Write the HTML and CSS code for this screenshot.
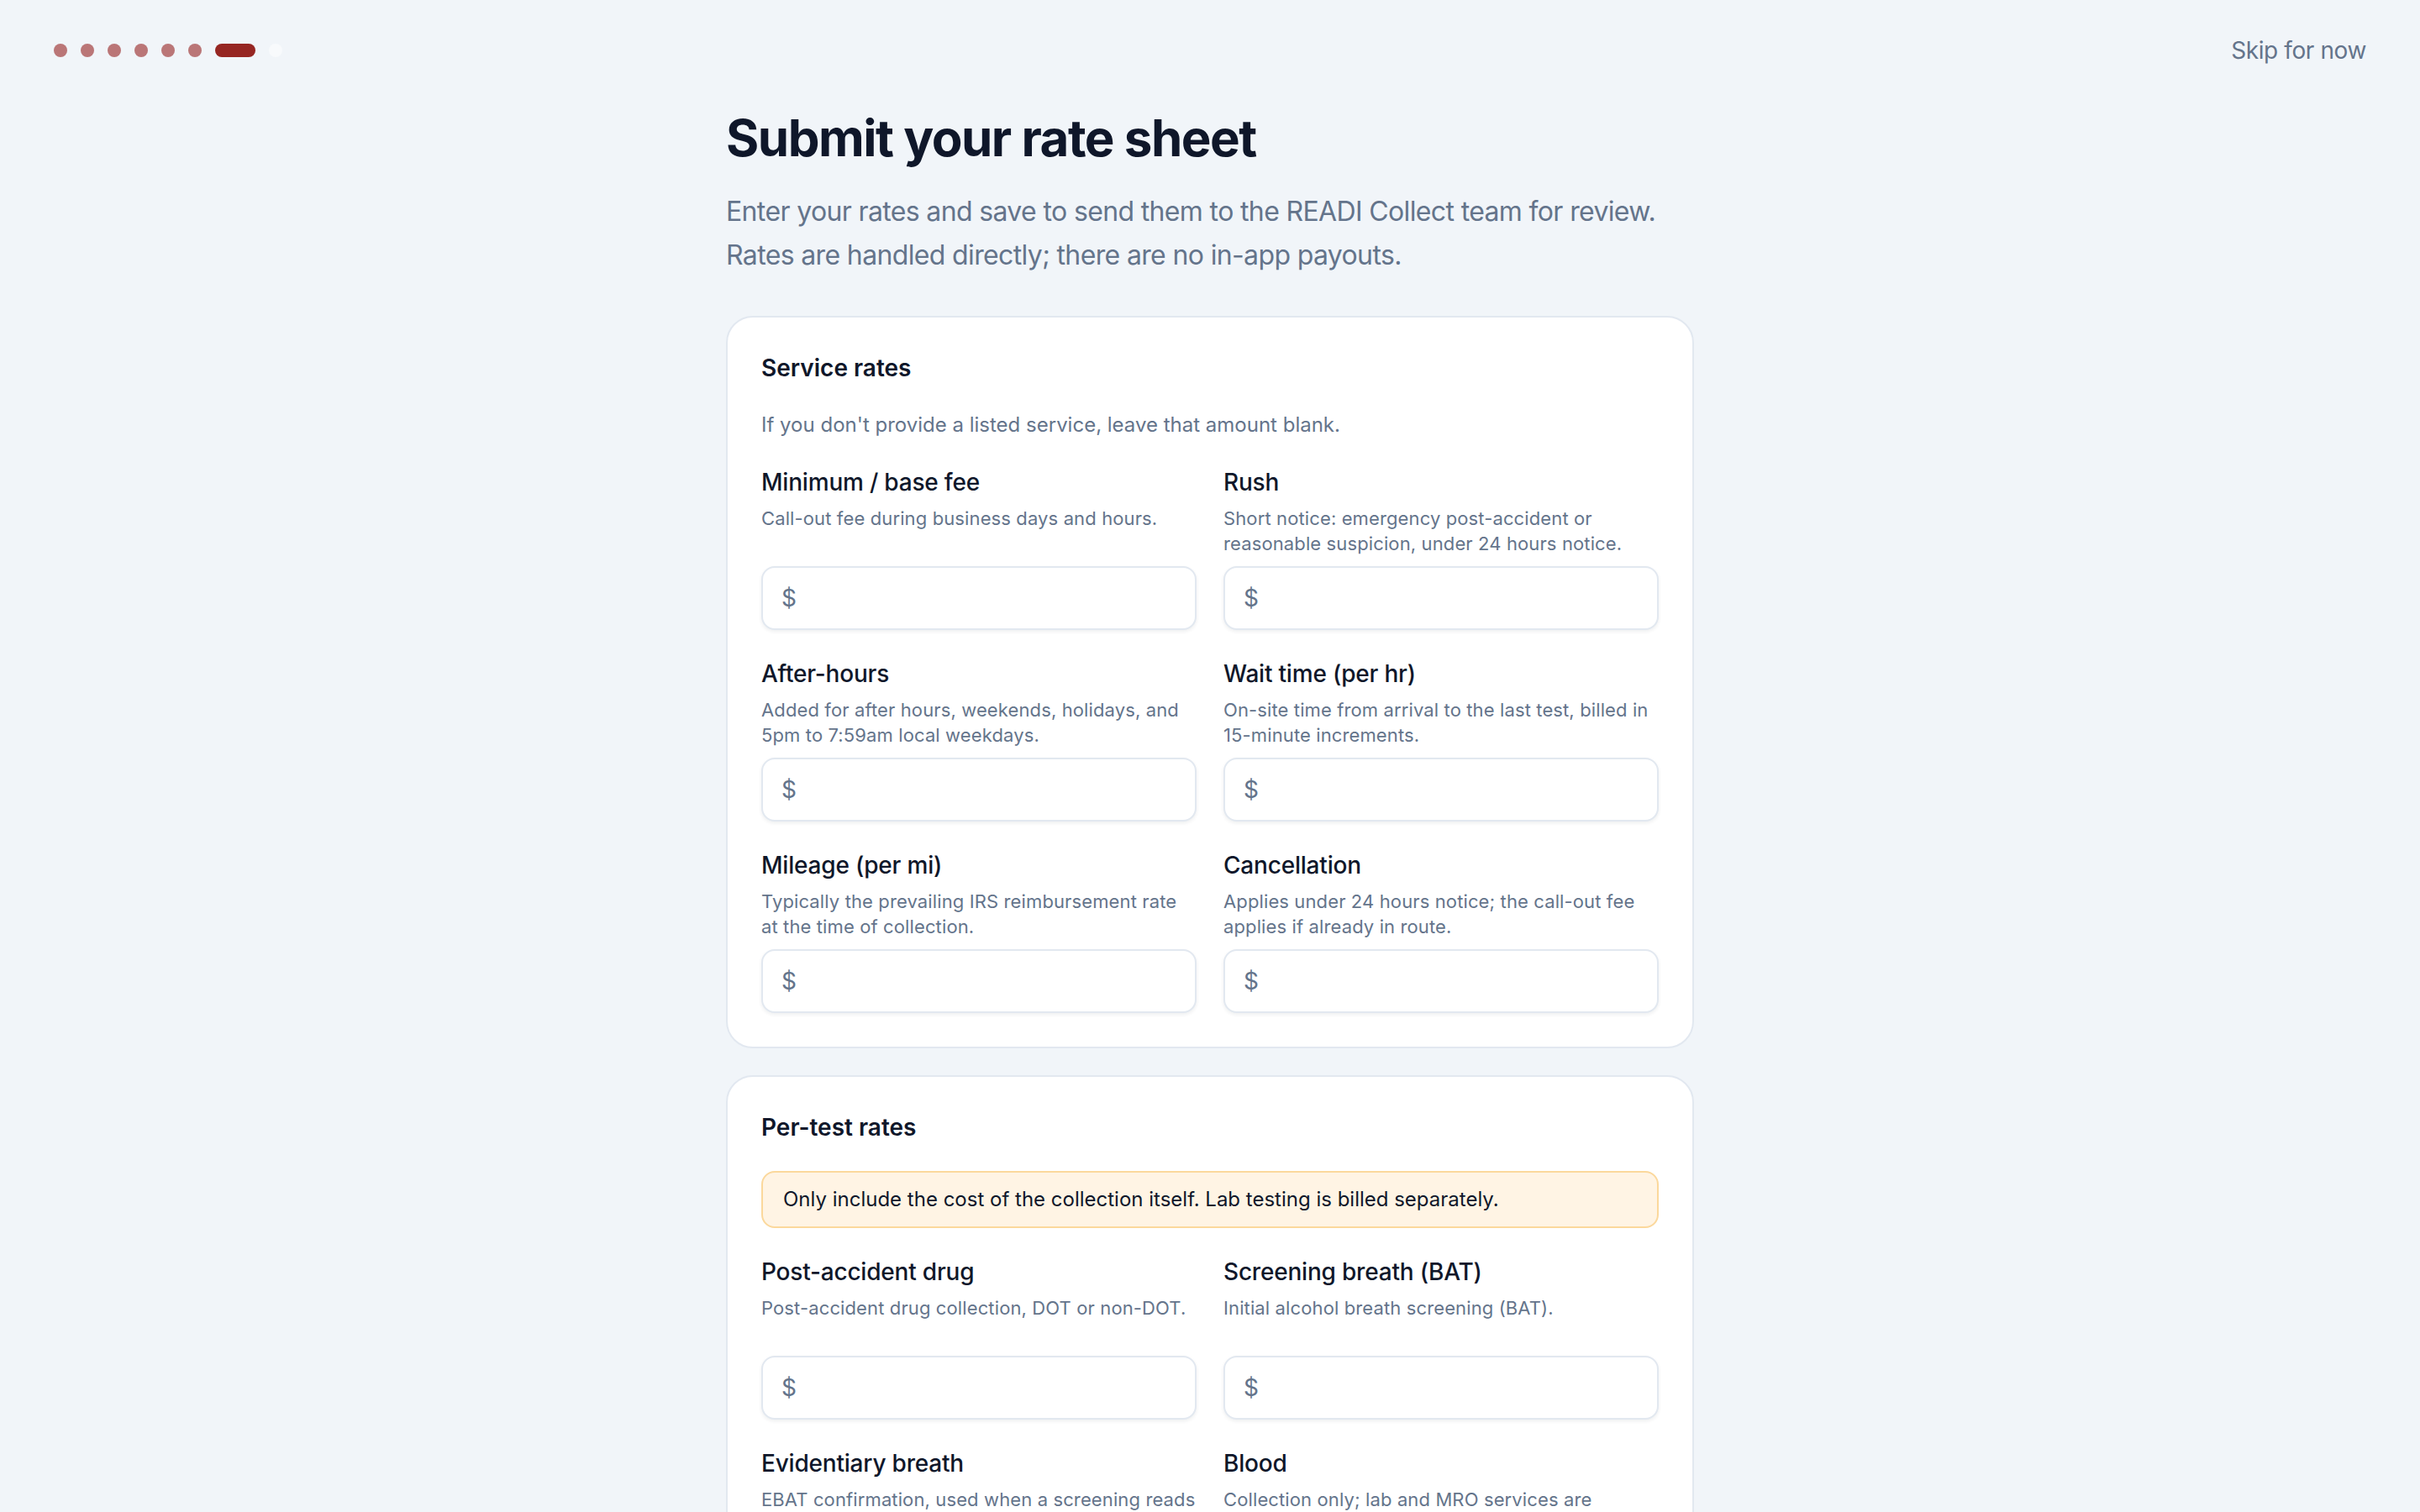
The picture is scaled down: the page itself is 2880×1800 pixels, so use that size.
FILE: index.html
```html
<!DOCTYPE html>
<html lang="en">
<head>
  <meta charset="UTF-8">
  <title>Submit your rate sheet – READI Collect</title>
  <link rel="stylesheet" href="styles.css">
</head>
<body>

  <header class="topbar">
    <div class="steps" aria-label="Step 7 of 8">
      <span class="step done"></span>
      <span class="step done"></span>
      <span class="step done"></span>
      <span class="step done"></span>
      <span class="step done"></span>
      <span class="step done"></span>
      <span class="step current"></span>
      <span class="step todo"></span>
    </div>
    <a href="#" class="skip">Skip for now</a>
  </header>

  <main class="page">
    <h1>Submit your rate sheet</h1>
    <p class="lead">Enter your rates and save to send them to the READI Collect team for review. Rates are handled directly; there are no in-app payouts.</p>

    <section class="card">
      <h2>Service rates</h2>
      <p class="intro">If you don't provide a listed service, leave that amount blank.</p>
      <div class="fields">
        <div class="field">
          <label for="baseFee">Minimum / base fee</label>
          <p class="hint">Call-out fee during business days and hours.</p>
          <div class="money"><span>$</span><input type="text" id="baseFee" inputmode="decimal"></div>
        </div>
        <div class="field">
          <label for="rush">Rush</label>
          <p class="hint">Short notice: emergency post-accident or reasonable suspicion, under 24 hours notice.</p>
          <div class="money"><span>$</span><input type="text" id="rush" inputmode="decimal"></div>
        </div>
        <div class="field">
          <label for="afterHours">After-hours</label>
          <p class="hint">Added for after hours, weekends, holidays, and 5pm to 7:59am local weekdays.</p>
          <div class="money"><span>$</span><input type="text" id="afterHours" inputmode="decimal"></div>
        </div>
        <div class="field">
          <label for="waitTime">Wait time (per hr)</label>
          <p class="hint">On-site time from arrival to the last test, billed in 15-minute increments.</p>
          <div class="money"><span>$</span><input type="text" id="waitTime" inputmode="decimal"></div>
        </div>
        <div class="field">
          <label for="mileage">Mileage (per mi)</label>
          <p class="hint">Typically the prevailing IRS reimbursement rate at the time of collection.</p>
          <div class="money"><span>$</span><input type="text" id="mileage" inputmode="decimal"></div>
        </div>
        <div class="field">
          <label for="cancel">Cancellation</label>
          <p class="hint">Applies under 24 hours notice; the call-out fee applies if already in route.</p>
          <div class="money"><span>$</span><input type="text" id="cancel" inputmode="decimal"></div>
        </div>
      </div>
    </section>

    <section class="card">
      <h2>Per-test rates</h2>
      <div class="notice">Only include the cost of the collection itself. Lab testing is billed separately.</div>
      <div class="fields">
        <div class="field">
          <label for="postAccident">Post-accident drug</label>
          <p class="hint">Post-accident drug collection, DOT or non-DOT.</p>
          <div class="money"><span>$</span><input type="text" id="postAccident" inputmode="decimal"></div>
        </div>
        <div class="field">
          <label for="bat">Screening breath (BAT)</label>
          <p class="hint">Initial alcohol breath screening (BAT).</p>
          <div class="money"><span>$</span><input type="text" id="bat" inputmode="decimal"></div>
        </div>
        <div class="field">
          <label for="ebat">Evidentiary breath</label>
          <p class="hint">EBAT confirmation, used when a screening reads 0.02 or higher.</p>
          <div class="money"><span>$</span><input type="text" id="ebat" inputmode="decimal"></div>
        </div>
        <div class="field">
          <label for="blood">Blood</label>
          <p class="hint">Collection only; lab and MRO services are invoiced separately.</p>
          <div class="money"><span>$</span><input type="text" id="blood" inputmode="decimal"></div>
        </div>
      </div>
    </section>
  </main>

</body>
</html>
```

FILE: styles.css
```css
/* 2x sizes: the page is shot in a 2880px wide window */
body {
  margin: 0;
  background-color: #f1f5f9;
  font-family: Inter, "Noto Sans", Arial, sans-serif;
  color: #0f172a;
}

.topbar { display: flex; justify-content: space-between; align-items: center; padding: 40px 64px; }
.steps { display: flex; align-items: center; gap: 16px; }
.step { width: 16px; height: 16px; border-radius: 8px; background-color: #ba7677; }
.step.current { width: 48px; background-color: #962622; }
.step.todo { background-color: #f8fafc; }
.skip { font-size: 28px; line-height: 40px; letter-spacing: -0.4px; color: #64748b; text-decoration: none; }

.page { max-width: 1152px; margin: 0 auto; padding: 8px 0 80px; }
h1 { margin: 0; font-size: 60px; line-height: 72px; font-weight: 700; letter-spacing: -1.5px; }
.lead { margin: 26px 0 0; font-size: 32px; line-height: 52px; letter-spacing: -0.64px; color: #64748b; }

.card {
  display: flex; flex-direction: column; gap: 32px;
  margin-top: 46px; padding: 40px;
  background-color: #fff; border: 2px solid #e2e8f0; border-radius: 32px;
}
.card + .card { margin-top: 32px; }
.card h2 { margin: 0; font-size: 28px; line-height: 40px; font-weight: 600; }
.intro { margin: 0; font-size: 24px; line-height: 32px; color: #64748b; }

.notice {
  padding: 16px 24px; font-size: 24px; line-height: 32px;
  background-color: #fff4e4; border: 2px solid #fbd89c; border-radius: 16px;
}

.fields { display: grid; grid-template-columns: 1fr 1fr; gap: 32px; }
.field label { display: block; font-size: 28px; line-height: 40px; font-weight: 500; letter-spacing: -0.2px; }
.hint { margin: 8px 0 0; min-height: 60px; font-size: 22px; line-height: 30px; letter-spacing: 0.12px; color: #64748b; }
.money {
  display: flex; align-items: center; box-sizing: border-box;
  height: 76px; margin-top: 12px; padding: 0 22px;
  background-color: #fff; border: 2px solid #e2e8f0; border-radius: 16px;
  box-shadow: 0 2px 4px rgba(15, 23, 42, 0.07);
}
.money span { font-size: 28px; color: #64748b; }
.money input {
  flex: 1; min-width: 0; margin-left: 8px; padding: 0;
  border: 0; outline: 0; background: transparent;
  font: inherit; font-size: 28px; color: #0f172a;
}
```
